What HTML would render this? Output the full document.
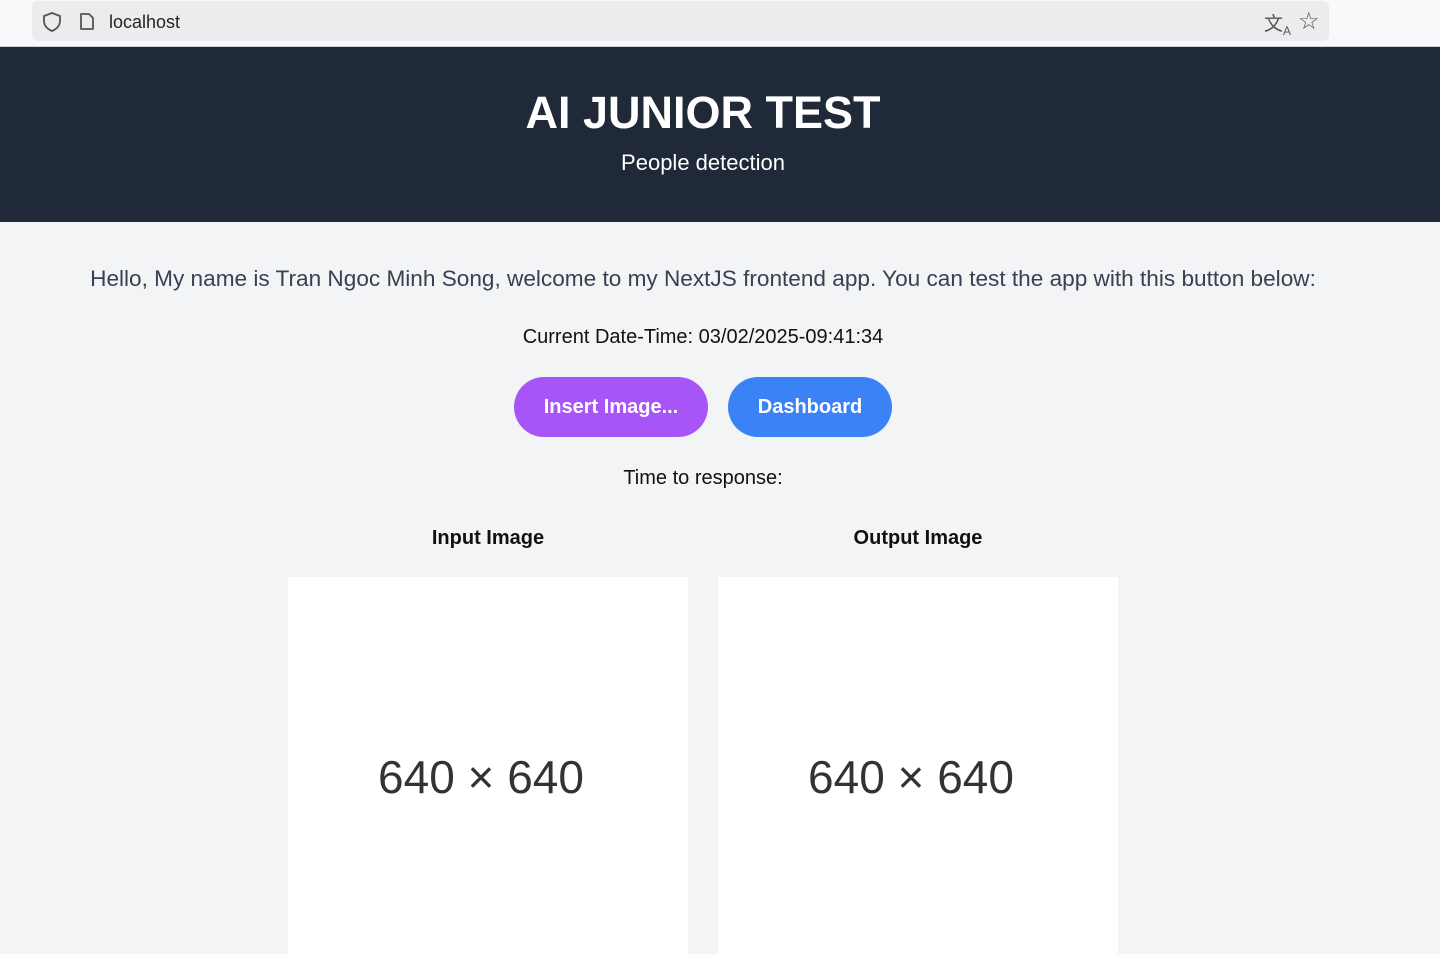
<!DOCTYPE html>
<html style="overflow:hidden"><head><meta charset="utf-8"><style>
body{margin:0;width:1440px;height:954px;overflow:hidden;background:#f3f4f6;font-family:"Liberation Sans",sans-serif;position:relative;}
.bar{position:absolute;left:0;top:0;width:1440px;height:46px;background:#f9f9fb;border-bottom:1px solid #d0d0d6;}
.url{position:absolute;left:32px;top:1px;width:1297px;height:40px;background:#ececef;border-radius:6px;}
.hdr{position:absolute;top:47px;left:0;width:1440px;height:175px;background:#1f2937;color:#fff;text-align:center;}
.c{position:absolute;left:0;width:1406px;text-align:center;}
.btn{position:absolute;top:377px;height:60px;border-radius:30px;color:#fff;font-weight:bold;font-size:20px;line-height:60px;text-align:center;}
.img{position:absolute;top:577px;width:400px;height:377px;background:#fff;text-align:center;font-size:46px;color:#333;line-height:400px;}
</style></head><body>
<div class="bar"><div class="url">
<svg style="position:absolute;left:10px;top:10px" width="20" height="22" viewBox="0 0 20 22"><path d="M10 2 L18 5 V10 C18 15 14 18.5 10 20 C6 18.5 2 15 2 10 V5 Z" fill="none" stroke="#555" stroke-width="1.8"/></svg>
<svg style="position:absolute;left:47px;top:11px" width="16" height="19" viewBox="0 0 16 19"><path d="M2 2 H10 L14 6 V17 H2 Z" fill="none" stroke="#555" stroke-width="1.8" stroke-linejoin="round"/></svg>
<span style="position:absolute;left:77px;top:11px;font-size:18px;color:#222">localhost</span>
<span style="position:absolute;left:1232px;top:8px;font-size:19px;color:#555">文<sub style="font-size:12px">A</sub></span>
<span style="position:absolute;left:1266px;top:6px;font-size:24px;color:#555">☆</span>
</div></div>
<div class="hdr">
<div style="position:absolute;top:40px;left:0;width:1406px;font-size:45px;font-weight:bold">AI JUNIOR TEST</div>
<div style="position:absolute;top:103px;left:0;width:1406px;font-size:22px">People detection</div>
</div>
<div class="c" style="top:266px;font-size:22.6px;color:#374151">Hello, My name is Tran Ngoc Minh Song, welcome to my NextJS frontend app. You can test the app with this button below:</div>
<div class="c" style="top:326px;font-size:20px;color:#111">Current Date-Time: 03/02/2025-09:41:34</div>
<div class="btn" style="left:514px;width:194px;background:#a855f7">Insert Image...</div>
<div class="btn" style="left:728px;width:164px;background:#3b82f6">Dashboard</div>
<div class="c" style="top:467px;font-size:20px;color:#111">Time to response:</div>
<div style="position:absolute;left:288px;width:400px;top:527px;text-align:center;font-weight:bold;font-size:20px;color:#111">Input Image</div>
<div style="position:absolute;left:718px;width:400px;top:527px;text-align:center;font-weight:bold;font-size:20px;color:#111">Output Image</div>
<div class="img" style="left:288px"><span style="position:relative;left:-7px">640 × 640</span></div>
<div class="img" style="left:718px"><span style="position:relative;left:-7px">640 × 640</span></div>
</body></html>
